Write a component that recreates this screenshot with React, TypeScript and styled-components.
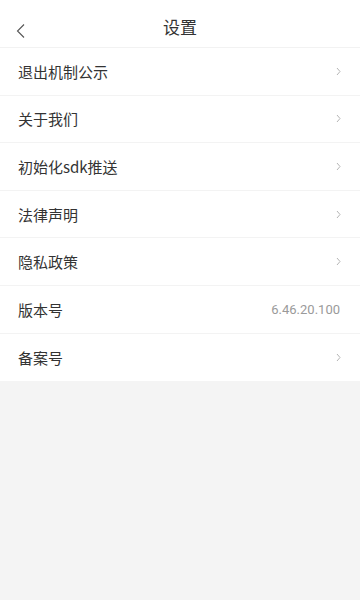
import React from "react";
import styled, { createGlobalStyle } from "styled-components";

const Global = createGlobalStyle`
  html, body { margin: 0; padding: 0; background: #f4f4f4; }
  body { font-family: "Noto Sans CJK SC", "Noto Sans", sans-serif; }
  #root { min-height: 600px; background: #f4f4f4; }
`;

const Page = styled.div`
  width: 360px;
  min-height: 600px;
  background: #f4f4f4;
  display: flex;
  flex-direction: column;
`;

const Header = styled.div`
  height: 48px;
  background: #fff;
  display: flex;
  align-items: center;
  justify-content: center;
  position: relative;
  border-bottom: 1px solid #f2f2f2;
  box-sizing: border-box;
`;

const Back = styled.button`
  position: absolute;
  left: 10px;
  top: 19px;
  width: 20px;
  height: 24px;
  border: 0;
  padding: 0;
  background: transparent;
  display: flex;
  align-items: center;
  justify-content: center;
`;

const Title = styled.div`
  font-size: 17px;
  color: #333;
  margin-top: 6px;
`;

const List = styled.div`
  background: #fff;
  display: flex;
  flex-direction: column;
`;

const Row = styled.div<{ $last?: boolean }>`
  height: 47.6px;
  box-sizing: border-box;
  display: flex;
  align-items: center;
  justify-content: space-between;
  padding: 0 19px 0 18px;
  border-bottom: ${(p) => (p.$last ? "none" : "1px solid #f3f3f3")};
`;

const Label = styled.span`
  font-size: 15px;
  color: #333;
`;

const Value = styled.span`
  font-family: Roboto, "Noto Sans", sans-serif;
  font-size: 13px;
  color: #9a9a9a;
  margin-right: 1px;
`;

const Chevron = () => (
  <svg width="5" height="9" viewBox="0 0 5 9">
    <path d="M1 1l3 3.5-3 3.5" fill="none" stroke="#b5b5b5" strokeWidth="1" />
  </svg>
);

const items: { label: string; value?: string }[] = [
  { label: "退出机制公示" },
  { label: "关于我们" },
  { label: "初始化sdk推送" },
  { label: "法律声明" },
  { label: "隐私政策" },
  { label: "版本号", value: "6.46.20.100" },
  { label: "备案号" },
];

export default function App() {
  return (
    <Page>
      <Global />
      <Header>
        <Back aria-label="back">
          <svg width="10" height="16" viewBox="0 0 10 16">
            <path d="M9 1.5L2.5 8 9 14.5" fill="none" stroke="#555" strokeWidth="1.1" />
          </svg>
        </Back>
        <Title>设置</Title>
      </Header>
      <List>
        {items.map((it, i) => (
          <Row key={it.label} $last={i === items.length - 1}>
            <Label>{it.label}</Label>
            {it.value ? <Value>{it.value}</Value> : <Chevron />}
          </Row>
        ))}
      </List>
    </Page>
  );
}
